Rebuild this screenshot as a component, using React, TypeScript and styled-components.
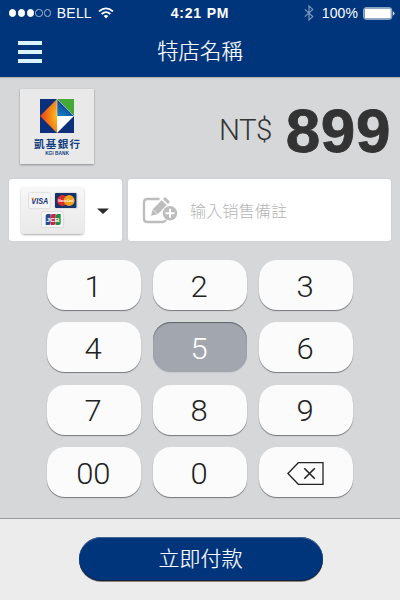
import React from "react";
import styled, { createGlobalStyle, css } from "styled-components";

const latin = '"Liberation Sans", Arial, sans-serif';
const light = 'Roboto, "Liberation Sans", sans-serif';
const cjk = '"Noto Sans CJK TC", "Noto Sans CJK SC", sans-serif';

const Global = createGlobalStyle`
  * { box-sizing: border-box; }
  body { margin: 0; }
  svg { display: block; flex: none; overflow: visible; }
  button { border: 0; padding: 0; }
`;

const Screen = styled.main`
  width: 400px;
  height: 600px;
  overflow: hidden;
  display: flex;
  flex-direction: column;
  background: #d6d7d9;
  font-family: ${latin};
`;

const Header = styled.header`
  height: 77px;
  flex: none;
  background: #00357b;
  color: #fff;
  box-shadow: 0 1px 1px #b9b3b0;
`;

const StatusBar = styled.div`
  height: 26px;
  padding: 0 5px 0 9px;
  display: grid;
  grid-template-columns: 1fr auto 1fr;
  align-items: center;
  font-size: 14px;
  line-height: 26px;
`;

const StatusGroup = styled.div<{ $end?: boolean }>`
  display: flex;
  align-items: center;
  justify-content: ${(p) => (p.$end ? "flex-end" : "flex-start")};
`;

const Signal = styled.div`
  display: flex;
  gap: 1.6px;
  margin-right: 5.5px;
`;

const Dot = styled.i<{ $on: boolean }>`
  width: 7.2px;
  height: 7.2px;
  border-radius: 50%;
  border: 1px solid ${(p) => (p.$on ? "#fff" : "#a9bcd4")};
  background: ${(p) => (p.$on ? "#fff" : "transparent")};
`;

const Carrier = styled.span`
  margin-right: 6px;
  letter-spacing: 0.2px;
`;

const Clock = styled.span`
  font-weight: 700;
  font-size: 14px;
  letter-spacing: 0.8px;
  margin-right: 4px;
`;

const Percent = styled.span`
  margin: 0 5px 0 8px;
  letter-spacing: 0.1px;
`;

const TitleBar = styled.div`
  height: 51px;
  padding: 0 18px;
  display: grid;
  grid-template-columns: 24px 1fr 24px;
  align-items: center;
`;

const MenuButton = styled.button`
  width: 24px;
  height: 22px;
  background: none;
  display: flex;
  flex-direction: column;
  justify-content: space-between;
`;

const MenuLine = styled.i`
  width: 24px;
  height: 4px;
  background: #d9f3ff;
`;

const Title = styled.h1`
  margin: 0;
  font: 300 21.4px/46px ${cjk};
  text-align: center;
  padding-bottom: 4px;
  -webkit-text-stroke: 0.2px #fff;
`;

const Amount = styled.section`
  height: 101px;
  flex: none;
  padding: 12px 9px 0 20px;
  display: flex;
  justify-content: space-between;
`;

const BankCard = styled.div`
  width: 74px;
  height: 75px;
  padding-top: 10px;
  background: #e9e9ea;
  box-shadow: 0 1px 2px #8f8f92;
  display: flex;
  flex-direction: column;
  align-items: center;
`;

const BankName = styled.div`
  margin-top: 4px;
  font: 700 10.5px/14px ${cjk};
  letter-spacing: 1.3px;
  margin-right: -1.3px;
  color: #123f80;
`;

const BankLatin = styled.div`
  font: 700 4.8px/6px ${latin};
  color: #123f80;
`;

const Price = styled.div`
  display: flex;
  align-items: flex-start;
  color: #333;
  height: 75px;
`;

const Currency = styled.span`
  font: 300 29.5px/30px ${light};
  letter-spacing: -0.6px;
  margin: 26px 14px 0 0;
`;

const Value = styled.span`
  font: 700 62px/83px ${latin};
  letter-spacing: 0.6px;
  -webkit-text-stroke: 0.8px #333;
`;

const Details = styled.section`
  height: 64px;
  flex: none;
  padding: 1px 9px;
  display: grid;
  grid-template-columns: 113px 263px;
  gap: 6px;
`;

const panel = css`
  height: 62px;
  border-radius: 3px;
  background: #fff;
  box-shadow: 0 0 2px #c5c6c9;
  display: flex;
  align-items: center;
`;

const MethodPicker = styled.div`
  ${panel}
  padding-left: 12px;
  gap: 12.5px;
`;

const CardBrands = styled.div`
  width: 63px;
  height: 47px;
  border-radius: 4px;
  background: linear-gradient(#f7f7f7, #e9e9e9);
  box-shadow: 0 1px 2px #aaa;
  display: flex;
  flex-wrap: wrap;
  justify-content: center;
  align-content: center;
  gap: 3.5px 5px;
`;

const Brand = styled.div`
  width: 21.5px;
  height: 15px;
  border-radius: 1px;
  background: #f5f5f7;
  box-shadow: 0 0 1.5px #999;
`;

const NoteField = styled.div`
  ${panel}
  padding-left: 14px;
  gap: 12px;
`;

const Placeholder = styled.span`
  font: 300 16.2px/24px ${cjk};
  color: #b5b5b7;
`;

const Keypad = styled.section`
  height: 276px;
  flex: none;
  padding: 18px 0 0 46.5px;
  display: grid;
  grid-template-columns: repeat(3, 94px);
  grid-auto-rows: 50px;
  column-gap: 12.3px;
  row-gap: 12.4px;
`;

const Key = styled.button<{ $pressed?: boolean }>`
  border-radius: 18px;
  background: #fbfbfb;
  color: #222;
  font: 300 29.5px/52px ${light};
  display: flex;
  align-items: center;
  justify-content: center;
  padding: 3px 1px 0 0;
  box-shadow: 0 1px 1px #77777a;
  ${(p) =>
    p.$pressed &&
    css`
      background: #a2a7af;
      color: #fff;
      box-shadow: inset 0 1px 1px #5f636a, 0 1px 0 #c6c9cd;
    `}
`;

const KeyLabel = styled.span`
  display: block;
  transform: scaleX(1.05);
`;

const Footer = styled.footer`
  flex: 1;
  padding-top: 18px;
  border-top: 1px solid #999;
  background: #ececec;
  display: flex;
  justify-content: center;
  align-items: flex-start;
`;

const PayButton = styled.button`
  width: 244px;
  height: 44px;
  margin-left: 1px;
  padding-bottom: 5px;
  border-radius: 22px;
  background: #00357b;
  color: #fff;
  font: 300 21px/38px ${cjk};
  -webkit-text-stroke: 0.2px #fff;
  box-shadow: inset 0 1px 0 #426893, inset 0 -1px 0 #14233c, 0 1px 0 #8d837a;
`;

const WifiIcon = () => (
  <svg width="16" height="12" viewBox="0 0 16 12" fill="none" stroke="#fff" strokeWidth="1.8">
    <path d="M1 4.4Q8-1.7 15 4.4M3.6 7Q8 3.2 12.4 7" />
    <path d="M5.7 9.1Q8 7.1 10.3 9.1L8 11.5Z" fill="#fff" stroke="none" />
  </svg>
);

const BluetoothIcon = () => (
  <svg width="10" height="16" viewBox="0 0 10 16" fill="none" stroke="#7e9dc2" strokeWidth="1.1">
    <path d="M.8 4.3 8.8 11.6 5 15V1L8.8 4.4.8 11.7" />
  </svg>
);

const BatteryIcon = () => (
  <svg width="32" height="13" viewBox="0 0 32 13">
    <rect x=".7" y=".7" width="28" height="11.6" rx="2.2" fill="none" stroke="#a9bfda" />
    <rect x="1.6" y="1.6" width="26.2" height="9.8" rx="1" fill="#fff" />
    <path d="M29.8 4.2Q31.5 4.9 31.5 6.5T29.8 8.8Z" fill="#d5e0ee" />
  </svg>
);

const BankLogo = () => (
  <svg width="34" height="34" viewBox="0 0 34 34">
    <defs>
      <radialGradient id="orange" cx="1" cy=".5" r="1">
        <stop offset="0" stopColor="#ffc01d" />
        <stop offset=".5" stopColor="#f37a16" />
        <stop offset="1" stopColor="#e43d17" />
      </radialGradient>
      <linearGradient id="blue" x1="0.6" x2="0" y1="0.2" y2="1">
        <stop stopColor="#0c3983" />
        <stop offset="1" stopColor="#1786cf" />
      </linearGradient>
    </defs>
    <path fill="#0b2f7b" d="M0 0h34v34H0z" />
    <path fill="#45aa35" d="M17 0h17v17z" />
    <path fill="url(#orange)" d="M17 0v34L0 17z" />
    <path fill="url(#blue)" d="M17 0l17 17H17z" />
    <path fill="#fff" d="M17 17h17L17 34z" />
    <path d="M17 0v17M17 0l17 17" stroke="#dce6ea" strokeWidth=".6" />
  </svg>
);

const VisaMark = () => (
  <svg width="21.5" height="15" viewBox="0 0 21.5 15">
    <text x="2.3" y="10.8" textLength="17" lengthAdjust="spacingAndGlyphs" fontFamily={latin} fontWeight="700" fontStyle="italic" fontSize="8.4" fill="#163477">VISA</text>
    <path d="M2.2 4.8h2.7l.9 3z" fill="#eea92d" />
  </svg>
);

const MastercardMark = () => (
  <svg width="21.5" height="15" viewBox="0 0 21.5 15">
    <rect width="21.5" height="15" rx="1" fill="#14336d" />
    <circle cx="7.4" cy="7.5" r="5.4" fill="#d92b2b" />
    <circle cx="14.2" cy="7.5" r="5.4" fill="#f4a01f" />
    <text x="3.2" y="9" textLength="15" lengthAdjust="spacingAndGlyphs" fontFamily={latin} fontWeight="700" fontStyle="italic" fontSize="4" fill="#fff">MasterCard</text>
  </svg>
);

const JcbMark = () => (
  <svg width="21.5" height="15" viewBox="0 0 21.5 15">
    <path d="M5.7 2h3v9q0 2-2 2h-3V4q0-2 2-2" fill="#244c92" />
    <path d="M10.7 2h3v9q0 2-2 2h-3V4q0-2 2-2" fill="#cc2445" />
    <path d="M15.7 2h3v9q0 2-2 2h-3V4q0-2 2-2" fill="#208f45" />
    <text x="4.2" y="9.6" textLength="13.6" lengthAdjust="spacingAndGlyphs" fontFamily={latin} fontWeight="700" fontSize="5.6" fill="#fff">JCB</text>
  </svg>
);

const Caret = () => (
  <svg width="12" height="7" viewBox="0 0 12 7">
    <path d="M0 1.5h12L6 7z" fill="#2b2b2b" />
  </svg>
);

const NoteIcon = () => (
  <svg width="36" height="29" viewBox="0 0 36 29">
    <path d="M17.5 3H5.5Q2 3 2 6.5v16Q2 26 5.5 26H20q3 0 4.5-2.5" fill="none" stroke="#bdbdbd" strokeWidth="2.4" />
    <path d="M9 19.7l1.7-6.5L19.7 4.2l5 5-9 9zM21 2.9l1.2-1.2q.9-.9 1.8 0l3.2 3.2q.9.9 0 1.8L26 7.9z" fill="#bdbdbd" />
    <path d="M10.8 13.4l4.7 4.7" stroke="#fff" strokeWidth=".7" />
    <circle cx="28" cy="17.3" r="8" fill="#fff" />
    <circle cx="28" cy="17.3" r="7.2" fill="#bdbdbd" />
    <path d="M23.5 17.3h9M28 12.8v9" stroke="#fff" strokeWidth="2" />
  </svg>
);

const BackspaceIcon = () => (
  <svg width="37" height="24" viewBox="0 0 37 24" fill="none" stroke="#222" strokeWidth="1.3">
    <path d="M11.3 .7H36V22.3H11.3L.9 11.5z" />
    <path d="M17.3 6.3 27.8 16.7M27.8 6.3 17.3 16.7" strokeWidth="1.6" />
  </svg>
);

const keys = ["1", "2", "3", "4", "5", "6", "7", "8", "9", "00", "0"];

export default function App() {
  return (
    <Screen>
      <Global />
      <Header>
        <StatusBar>
          <StatusGroup>
            <Signal>
              {[true, true, true, false, false].map((on, i) => (
                <Dot key={i} $on={on} />
              ))}
            </Signal>
            <Carrier>BELL</Carrier>
            <WifiIcon />
          </StatusGroup>
          <Clock>4:21 PM</Clock>
          <StatusGroup $end>
            <BluetoothIcon />
            <Percent>100%</Percent>
            <BatteryIcon />
          </StatusGroup>
        </StatusBar>
        <TitleBar>
          <MenuButton aria-label="Menu">
            <MenuLine />
            <MenuLine />
            <MenuLine />
          </MenuButton>
          <Title>特店名稱</Title>
        </TitleBar>
      </Header>
      <Amount>
        <BankCard>
          <BankLogo />
          <BankName>凱基銀行</BankName>
          <BankLatin>KGI BANK</BankLatin>
        </BankCard>
        <Price>
          <Currency>NT$</Currency>
          <Value>899</Value>
        </Price>
      </Amount>
      <Details>
        <MethodPicker>
          <CardBrands>
            <Brand><VisaMark /></Brand>
            <Brand><MastercardMark /></Brand>
            <Brand><JcbMark /></Brand>
          </CardBrands>
          <Caret />
        </MethodPicker>
        <NoteField>
          <NoteIcon />
          <Placeholder>输入销售備註</Placeholder>
        </NoteField>
      </Details>
      <Keypad>
        {keys.map((k) => (
          <Key key={k} $pressed={k === "5"}>
            <KeyLabel>{k}</KeyLabel>
          </Key>
        ))}
        <Key aria-label="Delete"><BackspaceIcon /></Key>
      </Keypad>
      <Footer>
        <PayButton>立即付款</PayButton>
      </Footer>
    </Screen>
  );
}
